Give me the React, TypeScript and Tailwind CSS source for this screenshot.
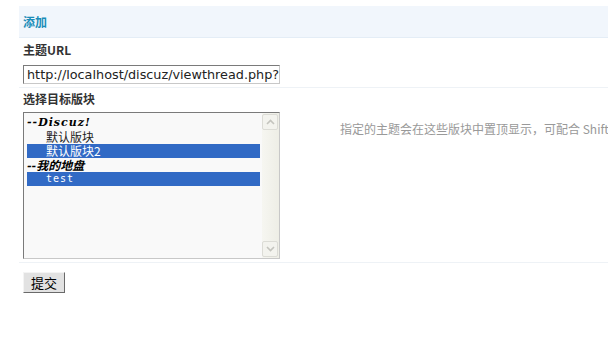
import React from "react";

const cjk = "font-['Noto_Sans_CJK_SC',sans-serif]";

function ScrollArrow({ up }: { up?: boolean }) {
  return (
    <div className="flex h-[16px] w-[16px] items-center justify-center rounded-[2px] border border-[#dcdcd6] bg-[#f3f3ee]">
      <svg width="9" height="6" viewBox="0 0 9 6">
        <path
          d={up ? "M1 5 L4.5 1.5 L8 5" : "M1 1 L4.5 4.5 L8 1"}
          fill="none"
          stroke="#c4c4be"
          strokeWidth="1.6"
        />
      </svg>
    </div>
  );
}

export default function App() {
  return (
    <div className={`min-h-[344px] w-[608px] overflow-hidden bg-white pl-[19px] pt-[6px] ${cjk}`}>
      <div className="flex h-[32px] items-center border-b border-[#e4edf6] bg-[#f1f6fc] pl-[4px] text-[12px] font-bold text-[#1a8db8]">
        添加
      </div>

      <div className="pl-[4px] pt-[3px] text-[12px] font-bold leading-[18px] text-[#333]">主题URL</div>

      <div className="pl-[4px] pt-[6px]">
        <div className="flex h-[19px] w-[257px] items-center overflow-hidden whitespace-nowrap border border-t-[#7a7a7a] border-l-[#7a7a7a] border-r-[#c8c8c8] border-b-[#c8c8c8] bg-white pl-[3px] font-['DejaVu_Sans',sans-serif] text-[12.8px] text-[#222]">
          http://localhost/discuz/viewthread.php?
        </div>
      </div>

      <div className="mt-[3px] border-t border-[#eef2f6]" />

      <div className="pl-[4px] pt-[2px] text-[12px] font-bold leading-[18px] text-[#333]">选择目标版块</div>

      <div className="flex items-start overflow-hidden pl-[4px] pt-[4px]">
        <div className="flex h-[147px] w-[257px] shrink-0 border border-t-[#7a7a7a] border-l-[#7a7a7a] border-r-[#c8c8c8] border-b-[#c8c8c8] bg-[#f9f9f9]">
          <div className="flex-1 pl-[3px] pt-[3px] pr-[2px] text-[12px] leading-[14px]">
            <div className="h-[14px] font-['DejaVu_Serif',serif] text-[11px] font-bold italic tracking-[1px] text-black">--Discuz!</div>
            <div className="h-[14px] pl-[19px] text-[#222]">默认版块</div>
            <div className="h-[14px] bg-[#316ac5] pl-[19px] text-white">默认版块2</div>
            <div className="h-[14px] text-[12px] font-bold italic text-black">
              <span className="font-['DejaVu_Serif',serif] text-[11px]">--</span>我的地盘
            </div>
            <div className="h-[14px] bg-[#316ac5] pl-[19px] font-['DejaVu_Sans_Mono',monospace] text-[10px] tracking-[1px] text-white">test</div>
          </div>
          <div className="flex w-[17px] flex-col justify-between bg-gradient-to-r from-[#f6f6f1] to-[#eeeee6] pb-[1px] pt-[1px]">
            <ScrollArrow up />
            <ScrollArrow />
          </div>
        </div>
        <div className="ml-[60px] mt-[8px] shrink-0 whitespace-nowrap text-[12px] text-[#999]">
          指定的主题会在这些版块中置顶显示，可配合 Shift 或 Ctrl 多选
        </div>
      </div>

      <div className="mt-[3px] border-t border-[#eef2f6]" />

      <div className="pl-[4px] pt-[9px]">
        <button
          type="button"
          className="flex h-[21px] w-[42px] items-center justify-center border border-t-[#f4f4f4] border-l-[#f4f4f4] border-r-[#6a6a6a] border-b-[#6a6a6a] bg-[#e2e2e2] text-[13px] text-black"
        >
          提交
        </button>
      </div>
    </div>
  );
}
